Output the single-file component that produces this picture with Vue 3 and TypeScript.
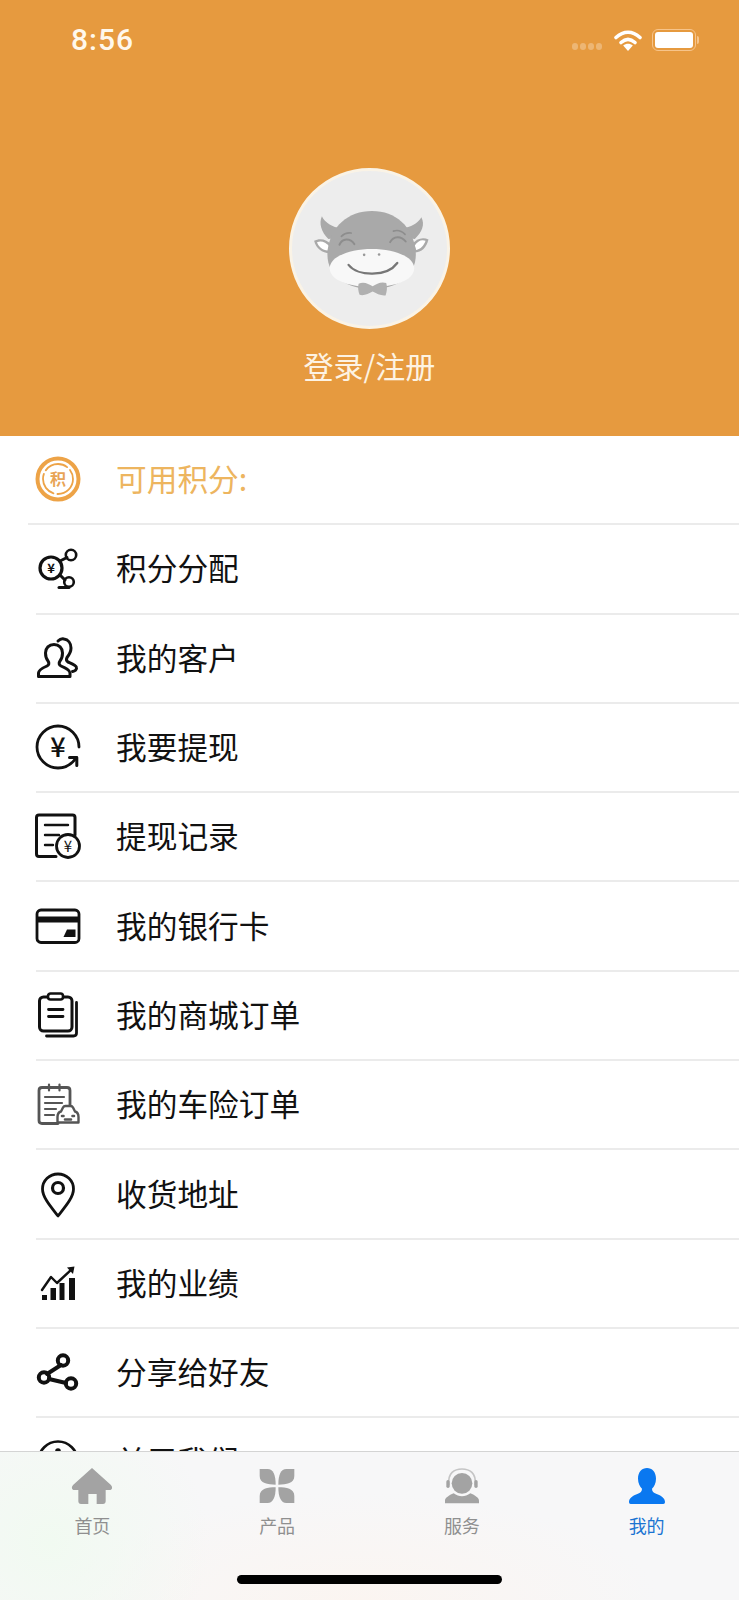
<template>
  <div class="page">
    <header class="profile">
      <div class="status-bar">
        <span class="clock">8:56</span>
        <div class="status-icons">
          <span class="signal"><i v-for="n in 4" :key="n"></i></span>
          <svg class="wifi" viewBox="0 0 28 22" width="28" height="22">
            <path d="M2 8.500C9.500 1.500 18.500 1.500 26 8.500" fill="none" stroke="#fff" stroke-width="3.600" stroke-linecap="round" />
            <path d="M7 13.500C11.500 9.500 16.500 9.500 21 13.500" fill="none" stroke="#fff" stroke-width="3.600" stroke-linecap="round" />
            <path d="M14 22l-4.800-5.600C12 14.200 16 14.200 18.800 16.400z" fill="#fff" />
          </svg>
          <div class="battery"><span class="battery-level"></span></div>
          <span class="battery-nub"></span>
        </div>
      </div>
      <div class="avatar">
        <svg viewBox="60 55 477 477" width="155" height="155">
          <path d="M172 264C150 242 142 216 152 194C160 210 174 222 202 230L190 262z" fill="#a9a9a9" />
          <path d="M438 264C460 242 470 220 458 197C450 212 436 222 408 230L420 262z" fill="#a9a9a9" />
          <path d="M128 270C146 260 168 266 182 282L176 308C152 308 134 294 128 270z" fill="#a9a9a9" />
          <path d="M137 274C150 268 164 274 174 286L170 300C154 298 142 288 137 274z" fill="#fff" />
          <path d="M480 266C462 257 442 264 430 280L436 306C460 306 474 290 480 266z" fill="#a9a9a9" />
          <path d="M471 270C458 265 446 272 438 284L442 298C456 296 466 284 471 270z" fill="#fff" />
          <path d="M306 178C232 178 180 226 170 296C160 376 226 418 306 418C386 418 450 376 440 296C430 226 380 178 306 178z" fill="#a9a9a9" />
          <path d="M306 295C240 295 176 318 176 354C176 394 245 412 306 412C367 412 436 394 436 354C436 318 372 295 306 295z" fill="#f8f8f8" />
          <path d="M206 282C215 262 238 260 252 280M362 274C372 254 396 254 410 272" fill="none" stroke="#8d8d8d" stroke-width="6" stroke-linecap="round" />
          <path d="M212 256C220 248 230 244 242 246M372 240C384 236 398 240 408 250" fill="none" stroke="#8d8d8d" stroke-width="5" stroke-linecap="round" />
          <circle cx="282" cy="313" r="4" fill="#999" />
          <circle cx="328" cy="312" r="4" fill="#999" />
          <path d="M234 344C262 380 352 382 384 338" fill="none" stroke="#777" stroke-width="7" stroke-linecap="round" />
          <path d="M265 402C280 394 296 402 308 410C320 402 336 394 350 400C354 412 352 428 348 438C334 440 320 432 308 426C296 432 282 440 268 436C264 426 262 412 265 402z" fill="#b0b0b0" />
        </svg>
      </div>
      <div class="login">登录/注册</div>
    </header>

    <div class="menu">
      <div v-for="item in items" :key="item.label" class="row" :class="{ 'row--points': item.icon === 'points' }">
        <svg class="row-icon" viewBox="0 0 48 48" width="48" height="48" fill="none" stroke="#111" stroke-width="2.600" stroke-linecap="round" stroke-linejoin="round">
          <template v-if="item.icon === 'points'">
            <circle cx="24" cy="24" r="20.500" stroke="#eda347" stroke-width="4" />
            <circle cx="24" cy="24" r="15" stroke="#eda347" stroke-width="1.800" stroke-dasharray="24 4" />
            <text x="24" y="29.500" class="glyph" font-size="16" font-weight="700" fill="#e8a456" stroke="none">积</text>
          </template>
          <template v-else-if="item.icon === 'allot'">
            <circle cx="17" cy="24" r="11" stroke-width="3.200" />
            <circle cx="37" cy="11" r="5.200" />
            <circle cx="35" cy="38" r="4.800" />
            <path d="M26 17L33 13.500M26 31L31 36" stroke-width="3" />
            <path d="M35 43.500H25" stroke-width="3" />
            <text x="17" y="28.500" class="glyph" font-size="13" font-weight="700" fill="#111" stroke="none">¥</text>
          </template>
          <template v-else-if="item.icon === 'clients'">
            <path d="M4.500 42.500V39C4.500 36 8.500 34 13 32C15 31 15.500 29 14 27C12 24.500 11.500 21.500 11.500 19C11.500 14 15 10.500 20 10.500S28.500 14 28.500 19C28.500 21.500 28 24.500 26 27C24.500 29 25 31 27 32C31.500 34 36 36 36 39V42.500Z" stroke-width="3" />
            <path d="M24 7C26 5 28 4.500 30 5C34 5.500 37 9 37 14C37 18 35 21 33 23.500C32 25.500 32.500 27 34 28C37.500 29.500 42 31 42.500 33.500C43 35.500 41 37 38.500 37.500" stroke-width="3" />
          </template>
          <template v-else-if="item.icon === 'withdraw'">
            <path d="M45 24C45 12.500 35.500 3 24 3S3 12.500 3 24S12.500 45 24 45C32 45 38 41 42.500 34.500" stroke-width="2.800" />
            <path d="M35.500 34.500H42.800V42.500" stroke-width="3" />
            <text x="24" y="33.500" class="glyph" font-size="27" font-weight="500" fill="#111" stroke="none">¥</text>
          </template>
          <template v-else-if="item.icon === 'records'">
            <path d="M22 44.500H5C3.500 44.500 2.500 43.500 2.500 42V5.500C2.500 4 3.500 3 5 3H38.500C40 3 41 4 41 5.500V23" stroke-width="3" />
            <path d="M11 13H34M11 23H25M11 33H19" stroke-width="2.400" />
            <circle cx="34" cy="34" r="11.500" fill="#fff" stroke-width="2.800" />
            <text x="34" y="39.500" class="glyph" font-size="15" fill="#111" stroke="none">¥</text>
          </template>
          <template v-else-if="item.icon === 'card'">
            <rect x="3" y="8" width="42" height="32.500" rx="4" stroke-width="2.800" />
            <path d="M3 14.500H45V20.500H3Z" fill="#111" stroke="none" />
            <path d="M33 27.500H41.500V35H29.500Z" fill="#111" stroke="none" />
          </template>
          <template v-else-if="item.icon === 'mall'">
            <rect x="5.500" y="6" width="32.500" height="34" rx="4" stroke-width="3" />
            <rect x="14" y="2.500" width="15" height="6" rx="2.500" fill="#fff" stroke-width="2.600" />
            <path d="M14.500 18.500H29M14.500 25.500H29" stroke-width="2.800" />
            <path d="M42.500 11.500V42C42.500 44 41.500 45 39.500 45H12.500" stroke-width="2.800" />
          </template>
          <template v-else-if="item.icon === 'insurance'">
            <path d="M24 43.500H8C6 43.500 5 42.500 5 40.500V10.500C5 8.500 6 7.500 8 7.500H33C35 7.500 36 8.500 36 10.500V26" stroke="#555" stroke-width="2.800" />
            <path d="M15 4.500V10.500M25.500 4.500V10.500M11 17H30M11 23H28M11 29H22M11 35H20" stroke="#555" stroke-width="2.200" />
            <path d="M23.500 37C23.500 34 25 32 27 31.500L29 27.500C29.500 26.500 30.500 26 31.500 26H36.500C37.500 26 38.500 26.500 39 27.500L41 31.500C43 32 44.500 34 44.500 37V42.500H23.500Z" fill="#fff" stroke="#555" stroke-width="2.400" />
            <path d="M28 36H29.500M38.500 36H40M31 39.500H37" stroke="#555" stroke-width="2.600" />
          </template>
          <template v-else-if="item.icon === 'pin'">
            <path d="M24 46C17 37 8.500 27.500 8.500 19C8.500 10.500 15.500 4 24 4S39.500 10.500 39.500 19C39.500 27.500 31 37 24 46Z" stroke-width="2.800" />
            <circle cx="24" cy="18" r="5.500" stroke-width="3.200" />
          </template>
          <template v-else-if="item.icon === 'chart'">
            <path d="M8 36H13V41H8ZM16.500 29H22V41H16.500ZM25.500 24H30.500V41H25.500ZM35 19H41V41H35Z" fill="#111" stroke="none" />
            <path d="M8 31L17 18L23 24L38 10" stroke-width="2.400" />
            <path d="M33 8.500L40.500 7.500L39 15Z" fill="#111" stroke="none" />
          </template>
          <template v-else-if="item.icon === 'share'">
            <path d="M27 17L13 26M15 31L32 35" stroke-width="4" />
            <circle cx="29" cy="12.500" r="5.200" stroke-width="4" />
            <circle cx="10" cy="29.500" r="5.200" stroke-width="4" />
            <circle cx="37" cy="35.500" r="5.200" stroke-width="4" />
          </template>
          <template v-else>
            <circle cx="24" cy="24" r="19.500" />
            <circle cx="24" cy="14" r="1.500" fill="#111" />
            <path d="M24 20V34" />
          </template>
        </svg>
        <span class="row-label">{{ item.label }}</span>
      </div>
    </div>

    <nav class="tabbar">
      <div v-for="tab in tabs" :key="tab.label" class="tab" :class="{ 'tab--active': tab.active }">
        <svg viewBox="0 0 126 108" width="42" height="36" fill="currentColor">
          <path v-if="tab.icon === 'home'" d="M63 0L119 50C126 57 124 66 116 66H104V100C104 105 101 108 96 108H77V78H52V108H30C25 108 22 105 22 100V66H10C2 66 0 57 7 50Z" />
          <g v-else-if="tab.icon === 'product'" transform="translate(9 0)">
            <path d="M2 3H26C42 3 50 20 50 50C26 50 2 46 2 24Z" />
            <path d="M106 3H82C66 3 58 20 58 50C82 50 106 46 106 24Z" />
            <path d="M2 105H26C42 105 50 88 50 58C26 58 2 62 2 84Z" />
            <path d="M106 105H82C66 105 58 88 58 58C82 58 106 62 106 84Z" />
          </g>
          <g v-else-if="tab.icon === 'service'" transform="translate(10 0)">
            <circle cx="53" cy="46" r="31" />
            <path d="M14 52C8 14 32 3 53 3S98 14 92 52" fill="none" stroke="currentColor" stroke-width="5" opacity="0.6" />
            <rect x="6" y="36" width="10" height="24" rx="5" />
            <rect x="90" y="36" width="10" height="24" rx="5" />
            <path d="M2 106V98C2 90 14 82 28 76C44 88 62 88 78 76C92 82 104 90 104 98V106Z" />
          </g>
          <path v-else d="M63 0C78 0 90 12 90 32C90 46 84 56 78 62C78 70 82 74 92 78C108 84 117 92 117 102C117 106 115 108 112 108H14C11 108 9 106 9 102C9 92 18 84 34 78C44 74 48 70 48 62C42 56 36 46 36 32C36 12 48 0 63 0Z" />
        </svg>
        <span class="tab-label">{{ tab.label }}</span>
      </div>
      <span class="home-indicator"></span>
    </nav>
  </div>
</template>

<script setup lang="ts">
interface MenuItem {
  label: string;
  icon: string;
}

interface Tab {
  label: string;
  icon: string;
  active?: boolean;
}

const items: MenuItem[] = [
  { label: "可用积分:", icon: "points" },
  { label: "积分分配", icon: "allot" },
  { label: "我的客户", icon: "clients" },
  { label: "我要提现", icon: "withdraw" },
  { label: "提现记录", icon: "records" },
  { label: "我的银行卡", icon: "card" },
  { label: "我的商城订单", icon: "mall" },
  { label: "我的车险订单", icon: "insurance" },
  { label: "收货地址", icon: "pin" },
  { label: "我的业绩", icon: "chart" },
  { label: "分享给好友", icon: "share" },
  { label: "关于我们", icon: "about" },
];

const tabs: Tab[] = [
  { label: "首页", icon: "home" },
  { label: "产品", icon: "product" },
  { label: "服务", icon: "service" },
  { label: "我的", icon: "me", active: true },
];
</script>

<style>
body {
  margin: 0;
  background: #fff;
}
</style>

<style scoped>
.page {
  width: 739px;
  height: 1600px;
  display: flex;
  flex-direction: column;
  overflow: hidden;
  font-family: "Noto Sans CJK SC", "Noto Sans", sans-serif;
  background: #fff;
}

.profile {
  height: 436px;
  flex-shrink: 0;
  display: flex;
  flex-direction: column;
  align-items: center;
  background: #e69a3f;
}

.status-bar {
  width: 100%;
  box-sizing: border-box;
  height: 80px;
  padding: 24px 40px 0 71px;
  display: flex;
  justify-content: space-between;
  align-items: flex-start;
}

.clock {
  font-family: Roboto, sans-serif;
  font-size: 30px;
  font-weight: 500;
  line-height: 32px;
  letter-spacing: 1px;
  color: #fff8ec;
}

.status-icons {
  display: flex;
  align-items: center;
  height: 32px;
}

.signal {
  display: flex;
  gap: 2px;
  margin: 12px 12px 0 0;
}

.signal i {
  width: 6px;
  height: 7px;
  border-radius: 3px;
  background: rgba(255, 255, 255, 0.28);
}

.battery {
  box-sizing: border-box;
  width: 44px;
  height: 22px;
  margin-left: 10px;
  padding: 2px;
  border: 1.500px solid #f7c48a;
  border-radius: 6px;
}

.battery-level {
  display: block;
  height: 100%;
  border-radius: 3px;
  background: #fff;
}

.battery-nub {
  width: 2px;
  height: 8px;
  margin-left: 1px;
  border-radius: 0 2px 2px 0;
  background: #f7c48a;
}

.avatar {
  box-sizing: border-box;
  width: 161px;
  height: 161px;
  margin-top: 88px;
  border: 3px solid #faf3e6;
  border-radius: 50%;
  background: #ededed;
  overflow: hidden;
}

.avatar svg {
  display: block;
}

.login {
  margin-top: 15px;
  font-size: 30px;
  line-height: 42px;
  color: #fdf3e3;
}

.menu {
  flex: 1;
  min-height: 0;
  overflow: hidden;
}

.row {
  box-sizing: border-box;
  height: 89.300px;
  margin-left: 36px;
  display: flex;
  align-items: center;
  border-bottom: 2px solid #ebebeb;
}

.row--points {
  margin-left: 28px;
}

.row-icon {
  flex-shrink: 0;
  margin-left: -2px;
  margin-bottom: 1px;
}

.row--points .row-icon {
  margin-left: 6px;
}

.glyph {
  text-anchor: middle;
  font-family: "Noto Sans CJK SC", sans-serif;
}

.row-label {
  margin-left: 34px;
  margin-bottom: 4px;
  font-size: 30.700px;
  color: #111;
}

.row--points .row-label {
  color: #edb55f;
}

.tabbar {
  position: relative;
  height: 149px;
  flex-shrink: 0;
  display: flex;
  border-top: 1px solid #d4d4d4;
  box-sizing: border-box;
  background:
    radial-gradient(ellipse 160px 150px at 50px 90px, #f1faf1, transparent),
    radial-gradient(ellipse 300px 110px at 360px 150px, #fbf5f1, transparent),
    #f7f7f8;
}

.tab {
  flex: 1;
  display: flex;
  flex-direction: column;
  align-items: center;
  padding-top: 16px;
  color: #a3a3a3;
}

.tab--active {
  color: #0a78f0;
}

.tab-label {
  margin-top: 8px;
  font-size: 18px;
  line-height: 26px;
  color: #8f8f8f;
}

.tab--active .tab-label {
  color: #1a74d2;
}

.home-indicator {
  position: absolute;
  left: 237px;
  bottom: 16px;
  width: 265px;
  height: 9px;
  border-radius: 5px;
  background: #000;
}
</style>
